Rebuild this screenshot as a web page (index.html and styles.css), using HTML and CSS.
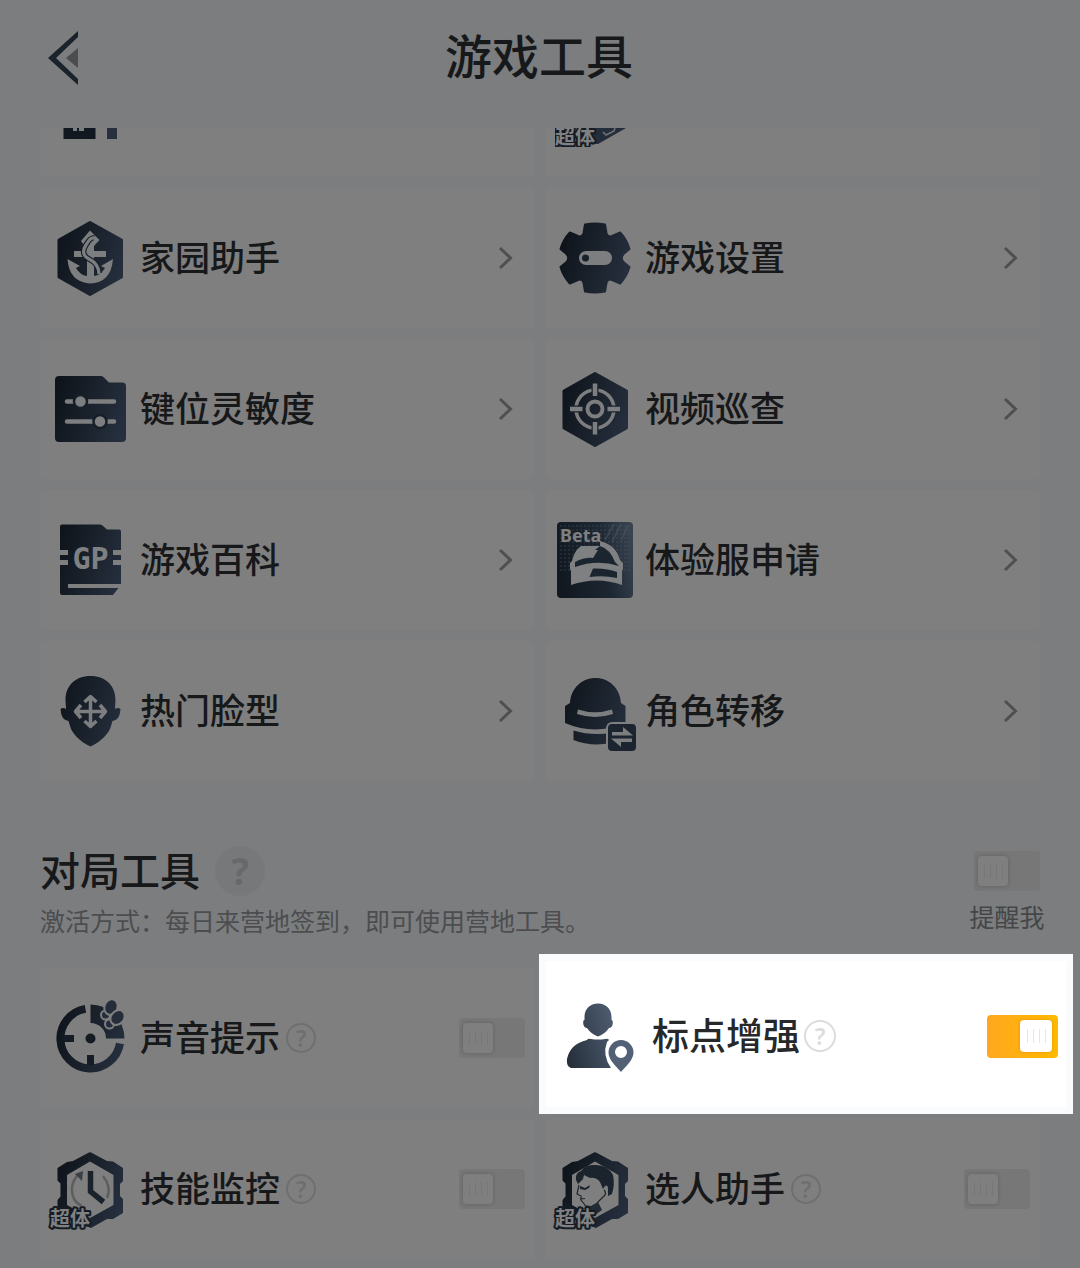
FILE: index.html
```html
<!DOCTYPE html>
<html lang="zh-CN">

<head>
  <meta charset="UTF-8">
  <meta name="viewport" content="width=device-width, initial-scale=1.0">
  <title>游戏工具</title>
  <link rel="stylesheet" href="styles.css">
</head>

<body>
  <!-- 公用渐变和图形 -->
  <svg class="defs" width="0" height="0" aria-hidden="true">
    <defs>
      <linearGradient id="ink" gradientUnits="userSpaceOnUse" x1="5" y1="30" x2="75" y2="50">
        <stop offset="0" stop-color="#0e141a" />
        <stop offset="1" stop-color="#262f3e" />
      </linearGradient>
      <linearGradient id="inkLight" gradientUnits="userSpaceOnUse" x1="10" y1="60" x2="76" y2="40">
        <stop offset="0" stop-color="#26313c" />
        <stop offset="1" stop-color="#5a687e" />
      </linearGradient>
      <path id="hex" d="M40 4.500L71.500 22V59L40 76.500L9 59V22Z" fill="url(#ink)" stroke="url(#ink)" stroke-width="3" stroke-linejoin="round" />
      <path id="frame" fill-rule="evenodd" fill="url(#ink)" d="M38 4Q40 2.500 42 4L57 12L63 12.500L73 19V32L70 35V47L73 50V64L63 70L57 70L41 79L20 71L7.500 64V51L10.500 47.500V34.500L7.500 31.500V19L17 13L23 12ZM40 12.500L17 26V56L40 69L63.500 56V26Z" />
      <path id="chevron" d="M3 3L13.500 13L3 23" fill="none" stroke="#4e4f50" stroke-width="3" />
    </defs>
  </svg>

  <header class="topbar">
    <button class="back" type="button" aria-label="返回">
      <svg width="32" height="56" viewBox="0 0 32 56">
        <path d="M30 1V7L8 28L30 49V55L0 28Z" fill="#1a222c" />
        <path d="M30 18V38L18 28Z" fill="#4b4c4e" />
      </svg>
    </button>
    <h1>游戏工具</h1>
  </header>

  <main>
    <div class="grid">
      <div class="card peek">
        <svg width="80" height="19" viewBox="0 61 80 19" aria-hidden="true">
          <path d="M13.500 61H23V64H27V61H29V64H34V61H45.500V72H13.500Z" fill="#11181f" />
          <rect x="57" y="61" width="10" height="11" fill="#282f3e" />
        </svg>
      </div>
      <div class="card peek">
        <svg width="80" height="19" viewBox="0 61 80 19" aria-hidden="true">
          <path d="M36 61H71L43 77H36Z" fill="#242d3b" />
          <path d="M48 65L51 68L59 64L60 61" fill="none" stroke="#737475" stroke-width="1.500" />
          <text class="super" x="0" y="77">超体</text>
        </svg>
      </div>

      <a class="card" href="#">
        <svg class="icon" viewBox="0 0 80 80" aria-hidden="true">
          <use href="#hex" />
          <path d="M17.500 41L30 48L26 50Q30 57 37 58V39H24V33H36V30L31 23L40 12.500L49.500 22L44 28V33H56V39H44V58Q51 57 55 50L51 48L63 41Q61 65 40 65.500Q19 64 17.500 41Z" fill="#7d7e7f" />
          <path d="M44 20C40 19 38 24 36 27C32 33 33 38 39 41C45 44 49 48 49 55" fill="none" stroke="#18202a" stroke-width="5.500" />
          <path d="M44 20C40 19 38 24 36 27C32 33 33 38 39 41C45 44 49 48 49 56" fill="none" stroke="#7d7e7f" stroke-width="3.200" />
        </svg>
        <span class="name">家园助手</span>
        <svg class="arrow" viewBox="0 0 16 26" aria-hidden="true"><use href="#chevron" /></svg>
      </a>
      <a class="card" href="#">
        <svg class="icon" viewBox="0 0 80 80" aria-hidden="true">
          <path d="M28.500 15L30 6.500Q40 4.500 50 6.500L51.500 15Q52.500 19.500 57 18L65.200 14.500Q72 22 74.500 31L68.500 36Q65 40 68.500 44L74.500 49Q72 58 65.200 65.500L57 62Q52.500 60.500 51.500 65L50 73.500Q40 75.500 30 73.500L28.500 65Q27.500 60.500 23 62L14.800 65.500Q8 58 5.500 49L11.500 44Q15 40 11.500 36L5.500 31Q8 22 14.800 14.500L23 18Q27.500 19.500 28.500 15Z" fill="url(#ink)" stroke="url(#ink)" stroke-width="2" stroke-linejoin="round" />
          <rect x="24" y="33" width="33" height="14" rx="7" fill="#7d7e7f" />
          <circle cx="30.500" cy="40" r="3.500" fill="#171f28" />
        </svg>
        <span class="name">游戏设置</span>
        <svg class="arrow" viewBox="0 0 16 26" aria-hidden="true"><use href="#chevron" /></svg>
      </a>

      <a class="card" href="#">
        <svg class="icon" viewBox="0 0 80 80" aria-hidden="true">
          <path d="M9 7H51Q53 7 54 8.500L59 13.500H72Q76 13.500 76 17V69Q76 73 72 73H9Q5 73 5 69V11Q5 7 9 7Z" fill="url(#ink)" />
          <path d="M17 32.500H64M17 52.500H64" stroke="#7d7e7f" stroke-width="4.500" stroke-linecap="round" />
          <g fill="#7d7e7f" stroke="#171f29" stroke-width="2.500">
            <circle cx="30.500" cy="32.500" r="6.500" />
            <circle cx="50" cy="52.500" r="6.500" />
          </g>
        </svg>
        <span class="name">键位灵敏度</span>
        <svg class="arrow" viewBox="0 0 16 26" aria-hidden="true"><use href="#chevron" /></svg>
      </a>
      <a class="card" href="#">
        <svg class="icon" viewBox="0 0 80 80" aria-hidden="true">
          <use href="#hex" />
          <circle cx="40" cy="40" r="19" fill="none" stroke="#7d7e7f" stroke-width="3.500" />
          <circle cx="40" cy="40" r="7.500" fill="none" stroke="#7d7e7f" stroke-width="4" />
          <path d="M40 16V25M40 55V64M16 40H25M55 40H64" stroke="#1a222d" stroke-width="7" />
          <path d="M40 14.500V27M40 53V65.500M15 40H27.500M52.500 40H65" stroke="#7d7e7f" stroke-width="4.500" />
        </svg>
        <span class="name">视频巡查</span>
        <svg class="arrow" viewBox="0 0 16 26" aria-hidden="true"><use href="#chevron" /></svg>
      </a>

      <a class="card" href="#">
        <svg class="icon" viewBox="0 0 80 80" aria-hidden="true">
          <path d="M12 4.500H50Q52 4.500 53 6L57 9.500H69Q71 9.500 71 11.500V30H63V35H71V40H63V45H71V64H18V68H68.500L63 75H12Q10 75 10 73V45H18V40H10V35H18V30H10V6.500Q10 4.500 12 4.500Z" fill="url(#ink)" />
          <text class="gp" x="40.500" y="49" text-anchor="middle">GP</text>
        </svg>
        <span class="name">游戏百科</span>
        <svg class="arrow" viewBox="0 0 16 26" aria-hidden="true"><use href="#chevron" /></svg>
      </a>
      <a class="card" href="#">
        <svg class="icon" viewBox="0 0 80 80" aria-hidden="true">
          <defs>
            <linearGradient id="beta" x1="0" y1="0.500" x2="1" y2="0.300">
              <stop offset="0" stop-color="#111820" />
              <stop offset="0.600" stop-color="#1d2733" />
              <stop offset="1" stop-color="#38434f" />
            </linearGradient>
            <pattern id="dots" width="4" height="4" patternUnits="userSpaceOnUse">
              <circle cx="2" cy="2" r="1" fill="#4a5865" opacity="0.350" />
            </pattern>
          </defs>
          <rect x="2" y="2" width="76" height="76" rx="4" fill="url(#beta)" />
          <rect x="4" y="4" width="72" height="48" fill="url(#dots)" />
          <path d="M59 4L50 20M66 4L57 22M73 6L66 20" stroke="#4a5663" stroke-width="2" opacity="0.500" />
          <path d="M16 65V51L15 49V43L17 41Q19 31 26 26H45V21Q61 25 65 40L68 43V49L67 51V65Q42 56 16 65Z" fill="#7f8081" />
          <path d="M20 42Q30 37 38 38L43 30H40L45 26Q55 29 60 42L64 46Q42 39 20 47Z" fill="#1b2530" />
          <path d="M38 48.500Q52 48 62 52V58Q48 55 34.500 57Z" fill="#1b2530" />
          <text class="beta" x="5" y="22">Beta</text>
        </svg>
        <span class="name">体验服申请</span>
        <svg class="arrow" viewBox="0 0 16 26" aria-hidden="true"><use href="#chevron" /></svg>
      </a>

      <a class="card" href="#">
        <svg class="icon" viewBox="0 0 80 80" aria-hidden="true">
          <path d="M40.500 5C56 5 65.500 15 65.500 29L65 38Q68 36 70.500 38Q70 49 62.500 50L60 58C56 66 47 73 40.500 75.500C34 73 25 66 21 58L18.500 50Q11 49 10.500 38Q13 36 16 38L15.500 29C15.500 15 25 5 40.500 5Z" fill="url(#ink)" />
          <path d="M40.500 26V55M26 40.500H55M34.500 31L40.500 25.500L46.500 31M34.500 50L40.500 55.500L46.500 50M31 34L25.500 40.500L31 47M50 34L55.500 40.500L50 47" fill="none" stroke="#7d7e7f" stroke-width="3.500" stroke-linejoin="round" />
        </svg>
        <span class="name">热门脸型</span>
        <svg class="arrow" viewBox="0 0 16 26" aria-hidden="true"><use href="#chevron" /></svg>
      </a>
      <a class="card" href="#">
        <svg class="icon" viewBox="0 0 80 80" aria-hidden="true">
          <path d="M15 32C16 17 27 7 40.500 7S65 17 66 32L70.500 35V52Q40 65 10 52V35Z" fill="url(#ink)" />
          <path d="M23 38.500Q40 44 57 38.500L58 43Q40 49 22 43Z" fill="#7d7e7f" />
          <path d="M18.500 59.500Q36 65 56 62V72Q36 76 18.500 69Z" fill="url(#ink)" />
          <rect x="52" y="52" width="30" height="29" rx="5" fill="#1b242f" stroke="#7f7f7f" stroke-width="2" />
          <path d="M57 64.500V61H68V56L78 64.500ZM77 67.500V71H66V76L56 67.500Z" fill="#7d7e7f" />
        </svg>
        <span class="name">角色转移</span>
        <svg class="arrow" viewBox="0 0 16 26" aria-hidden="true"><use href="#chevron" /></svg>
      </a>
    </div>

    <section>
      <div class="section-head">
        <div>
          <div class="section-title">
            <h2>对局工具</h2>
            <button class="help big" type="button" aria-label="对局工具说明">?</button>
          </div>
          <p>激活方式：每日来营地签到，即可使用营地工具。</p>
        </div>
        <div class="remind">
          <input class="switch" type="checkbox" id="remind">
          <label for="remind">提醒我</label>
        </div>
      </div>

      <div class="grid">
        <div class="card">
          <svg class="icon" viewBox="0 0 80 80" aria-hidden="true">
            <path d="M35.500 10.900A30 30 0 1 0 70 45.500" fill="none" stroke="url(#ink)" stroke-width="8" />
            <path d="M40.500 6.500A34 34 0 0 1 74.500 40.500H56A15.500 15.500 0 0 0 40.500 25Z" fill="url(#ink)" />
            <path d="M14 40.500H24M40.500 57V67" stroke="#151c25" stroke-width="7" />
            <circle cx="40.500" cy="40.500" r="5" fill="#141b23" />
            <g fill="#252d3b" stroke="#7f7f7f" stroke-width="2">
              <circle cx="55.500" cy="17" r="4.500" />
              <ellipse cx="61" cy="9" rx="6.500" ry="8" transform="rotate(20 61 9)" />
              <circle cx="59.500" cy="26" r="4.500" />
              <ellipse cx="67.500" cy="19.500" rx="6.500" ry="8" transform="rotate(40 67.500 19.500)" />
            </g>
          </svg>
          <label class="name" for="sound">声音提示</label>
          <button class="help" type="button" aria-label="声音提示说明">?</button>
          <input class="switch" type="checkbox" id="sound">
        </div>

        <div class="card">
          <!-- 高亮引导，盖在原卡片上 -->
          <div class="spotlight">
            <svg class="icon" viewBox="0 0 84 84" aria-hidden="true">
              <path d="M40 9.500C48 9.500 53.500 15 53.500 23V26Q55.500 26 54.500 31Q53.500 34 51 34Q47 40 40 42.500Q33 40 29 34Q26.500 34 25.500 31Q24.500 26 26.500 26V23C26.500 15 32 9.500 40 9.500Z" fill="url(#inkLight)" />
              <path d="M29 46Q30 44 33 45Q40 46 47 45Q50 44 51 46L49 48Q44 61 53 74H13Q8 72 9 65Q12 50 29 46Z" fill="url(#inkLight)" />
              <path d="M63 46A12.500 12.500 0 0 1 75.500 58.500C75.500 66 68 72 63 78C58 72 50.500 66 50.500 58.500A12.500 12.500 0 0 1 63 46ZM63 52A6 6 0 1 0 63 64A6 6 0 1 0 63 52Z" fill="#536177" />
            </svg>
            <label class="name" for="marker">标点增强</label>
            <button class="help" type="button" aria-label="标点增强说明">?</button>
            <input class="switch" type="checkbox" id="marker" checked>
          </div>
        </div>

        <div class="card">
          <svg class="icon" viewBox="0 0 80 80" aria-hidden="true">
            <use href="#frame" />
            <path d="M29 25Q18 36 24 50Q27 55 32 57M53 27Q62 38 57 49" fill="none" stroke="#5c5e60" stroke-width="2.500" />
            <path d="M25 25L33 22L32 32Z" fill="#3b3f44" />
            <path d="M40.500 22V42.500L53.500 53" fill="none" stroke="#1a222c" stroke-width="5.500" />
            <text class="super" x="0" y="77">超体</text>
          </svg>
          <label class="name" for="skill">技能监控</label>
          <button class="help" type="button" aria-label="技能监控说明">?</button>
          <input class="switch" type="checkbox" id="skill">
        </div>

        <div class="card">
          <svg class="icon" viewBox="0 0 80 80" aria-hidden="true">
            <use href="#frame" />
            <path d="M21 31Q20 24 26 22Q31 15 39 16Q52 15 58 26Q60 36 57 45L53 47L53 40Q53 35 50 37L48 40L45 33Q41 28 35 29L29 26L28 30L23 35Z" fill="#1b232d" />
            <path d="M25 37L30 39L35 36L34 39L30 41L25 40Z" fill="#1b232d" />
            <path d="M24 36L22 45L26 47L26 51L30 56" fill="none" stroke="#20272f" stroke-width="1.200" />
            <path d="M25 50L30 49.500M49 41Q52 44 49 47L42 54" fill="none" stroke="#20272f" stroke-width="1.200" />
            <path d="M29 56L36 57L43 53L47 61L40 66L34 63Z" fill="#222a34" />
            <text class="super" x="0" y="77">超体</text>
          </svg>
          <label class="name" for="pick">选人助手</label>
          <button class="help" type="button" aria-label="选人助手说明">?</button>
          <input class="switch" type="checkbox" id="pick">
        </div>
      </div>
    </section>
  </main>
</body>

</html>
```
FILE: styles.css
```css
* {
  box-sizing: border-box;
}

body {
  margin: 0;
  background-color: #7b7d7f;
  color: #17181a;
  font-family: "Noto Sans CJK SC", "Noto Sans", sans-serif;
}

h1,
h2,
p {
  margin: 0;
}

button {
  padding: 0;
  border: none;
  background: none;
  font-family: inherit;
  cursor: pointer;
}

.defs {
  position: absolute;
}

/* 顶部标题栏 */
.topbar {
  display: grid;
  grid-template-columns: 1fr auto 1fr;
  align-items: center;
  height: 128px;
  padding: 0 50px 12px 48px;
}

.back {
  justify-self: start;
  display: flex;
}

h1 {
  padding-bottom: 8px;
  font-size: 47px;
  line-height: 60px;
  font-weight: 500;
}

main {
  padding: 0 40px 9px;
}

/* 卡片 */
.grid {
  display: grid;
  grid-template-columns: 1fr 1fr;
  gap: 11px 10px;
}

.card {
  position: relative;
  display: flex;
  align-items: center;
  min-height: 140px;
  padding: 0 10px;
  border-radius: 4px;
  background-color: #7f7f7f;
  color: inherit;
  text-decoration: none;
}

.card.peek {
  align-items: flex-start;
  min-height: 49px;
  border-radius: 0 0 4px 4px;
}

.icon {
  flex: none;
  width: 80px;
  height: 80px;
  overflow: visible;
}

.name {
  margin-left: 10px;
  padding-bottom: 4px;
  font-size: 35px;
  line-height: 50px;
  font-weight: 500;
  white-space: nowrap;
}

.arrow {
  width: 16px;
  height: 26px;
  margin-left: auto;
  margin-right: 12px;
}

/* 图标里的文字 */
.super {
  font-size: 20px;
  font-weight: 700;
  fill: #808182;
  stroke: #151c25;
  stroke-width: 4px;
  stroke-linejoin: round;
  paint-order: stroke;
}

.gp {
  font-family: "DejaVu Sans Mono", monospace;
  font-size: 30px;
  font-weight: 700;
  fill: #7f8081;
}

.beta {
  font-family: "Noto Sans", sans-serif;
  font-size: 18px;
  font-weight: 700;
  fill: #7f8081;
}

/* 对局工具标题 */
.section-head {
  display: flex;
  justify-content: space-between;
  align-items: flex-start;
  padding: 65px 0 29px;
}

.section-title {
  display: flex;
  align-items: center;
  gap: 15px;
  height: 50px;
}

h2 {
  padding-bottom: 4px;
  font-size: 40px;
  line-height: 50px;
  font-weight: 500;
}

.section-head p {
  margin-top: 6px;
  padding-bottom: 1px;
  color: #4c4d4f;
  font-size: 25px;
  line-height: 36px;
}

.remind {
  display: flex;
  flex-direction: column;
  align-items: center;
  width: 66px;
  padding-top: 5px;
}

.remind label {
  margin-top: 7px;
  color: #454648;
  font-size: 25px;
  line-height: 36px;
  white-space: nowrap;
}

/* 问号按钮 */
.help {
  flex: none;
  width: 30px;
  height: 30px;
  margin-left: 6px;
  border: 2px solid #6f6f70;
  border-radius: 50%;
  color: #6f6f70;
  font-family: "Noto Sans", sans-serif;
  font-size: 23px;
  font-weight: 600;
  line-height: 26px;
}

.help.big {
  width: 50px;
  height: 50px;
  margin-left: 0;
  border: none;
  background-color: #777879;
  color: #686969;
  font-size: 37px;
  font-weight: 700;
  line-height: 50px;
}

/* 开关 */
.switch {
  appearance: none;
  flex: none;
  display: flex;
  align-items: center;
  width: 66px;
  height: 40px;
  margin: 0;
  padding: 0 4px;
  border-radius: 4px;
  background-color: #777777;
  cursor: pointer;
}

.switch::before {
  content: "";
  width: 30px;
  height: 30px;
  border-radius: 4px;
  background: repeating-linear-gradient(90deg, #777777 0 1px, transparent 1px 6px) center / 19px 14px no-repeat #7f7f7f;
  box-shadow: 0 0 4px rgba(0, 0, 0, 0.2);
}

.card .switch {
  margin-left: auto;
}

/* 高亮区域 */
.spotlight {
  position: absolute;
  top: -14px;
  right: -33px;
  bottom: -6px;
  left: -6px;
  z-index: 1;
  display: flex;
  align-items: center;
  padding: 4px 15px 0 19px;
  background-color: #ffffff;
  box-shadow: inset 0 0 0 7px #f9fbfd;
  color: #26282a;
}

.spotlight .icon {
  width: 84px;
  height: 84px;
}

.spotlight .name {
  font-size: 37px;
}

.spotlight .help {
  width: 32px;
  height: 32px;
  margin-left: 4px;
  border-color: #dcdcdc;
  color: #dcdcdc;
  line-height: 28px;
}

.spotlight .switch {
  justify-content: flex-end;
  width: 71px;
  height: 43px;
  padding: 0 6px;
  background: linear-gradient(90deg, #ffa81e, #ffb900);
}

.spotlight .switch::before {
  width: 32px;
  height: 32px;
  background: repeating-linear-gradient(90deg, #e6e6e6 0 1px, transparent 1px 6px) center / 19px 14px no-repeat #ffffff;
  box-shadow: 0 0 3px rgba(160, 100, 0, 0.4);
}
```
